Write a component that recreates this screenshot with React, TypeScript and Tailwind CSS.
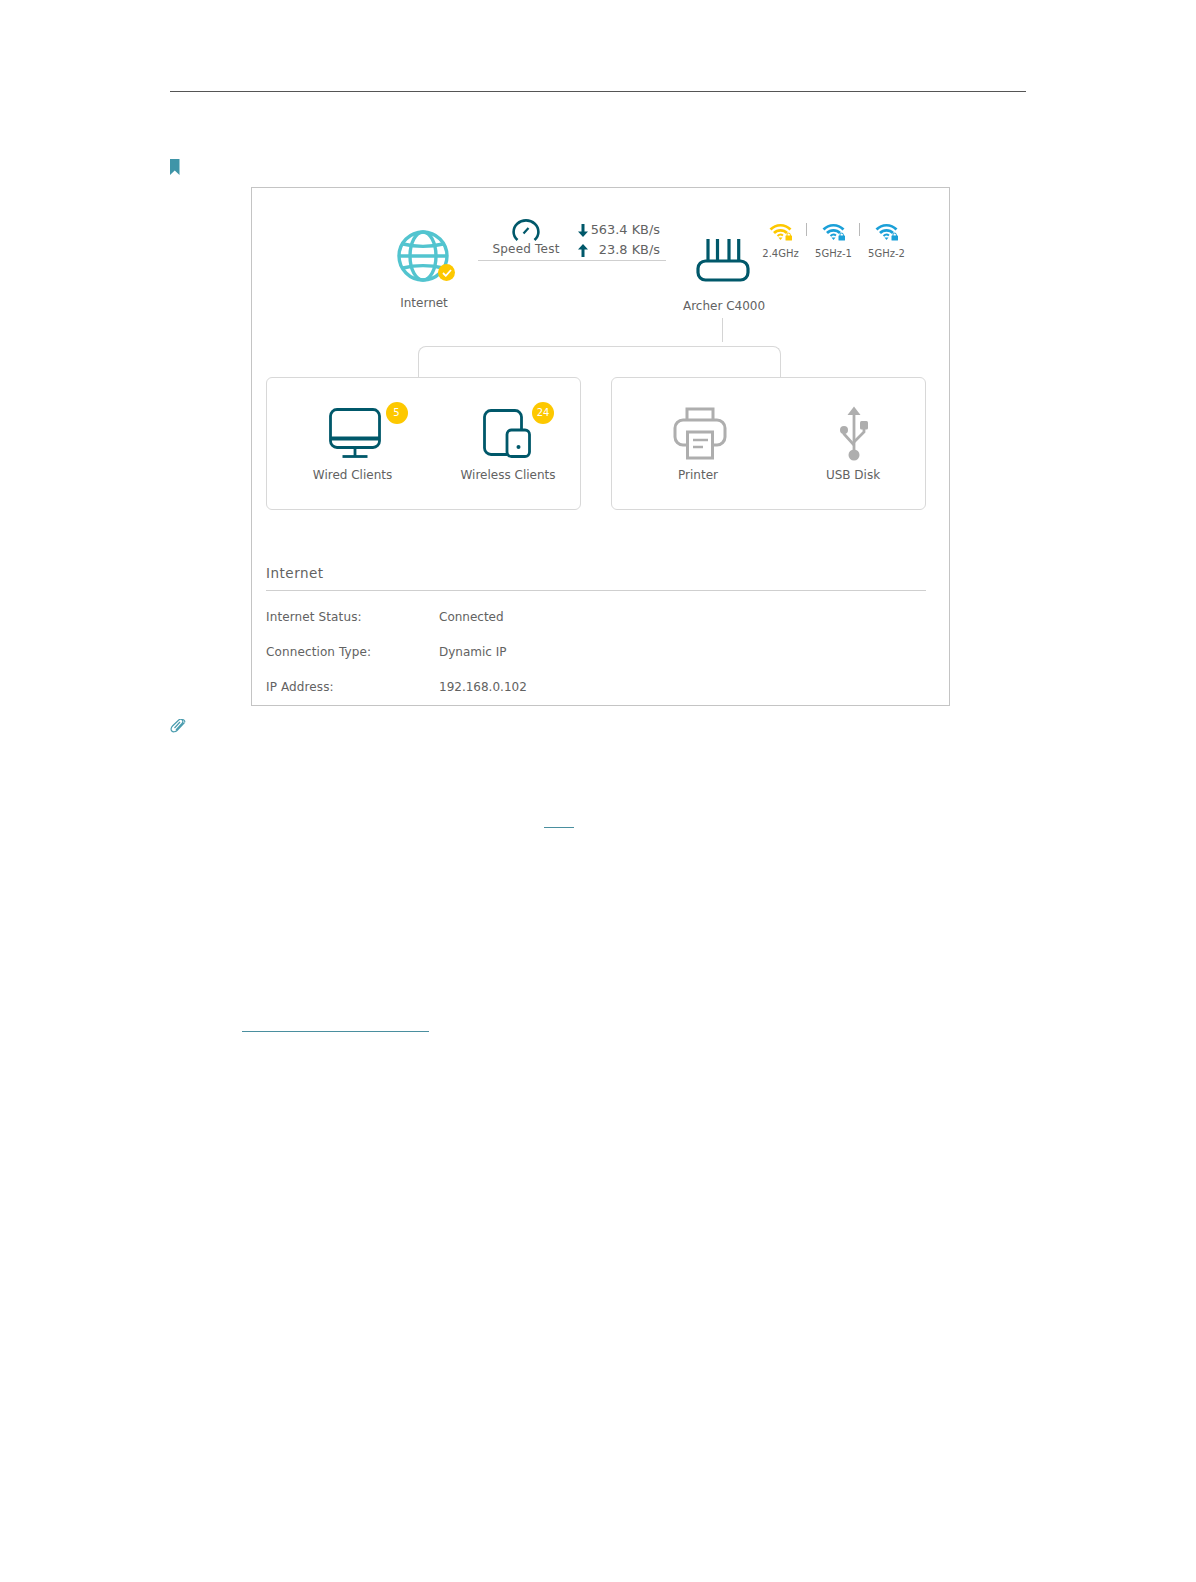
import React from "react";

const teal = "#00586a";
const gray = "#aeaeae";

function Globe() {
  return (
    <svg width="54" height="54" viewBox="0 0 54 54" fill="none" stroke="#52c4cf" strokeWidth="3.400">
      <circle cx="26" cy="26" r="24" />
      <ellipse cx="26" cy="26" rx="13" ry="24" />
      <path d="M6 14c12 3 28 3 40 0" />
      <path d="M6 38c12-3 28-3 40 0" />
      <path d="M2 26h48" />
    </svg>
  );
}

function Gauge() {
  return (
    <svg width="28" height="22" viewBox="0 0 28 22" fill="none" stroke={teal} strokeWidth="2.600">
      <path d="M5.500 21C2.800 18.600 1.600 15.800 1.600 13A12.400 11.600 0 0 1 26.400 13C26.400 15.800 25.200 18.600 22.500 21" />
      <path d="M11.500 14.500 16.500 9" strokeWidth="2.200" />
    </svg>
  );
}

function Arrow({ up }: { up?: boolean }) {
  return (
    <svg width="10" height="13" viewBox="0 0 10 13" fill={teal} className={up ? "rotate-180" : ""}>
      <path d="M3.500 0h3v7.500H10L5 13 0 7.500h3.500z" />
    </svg>
  );
}

function Router() {
  return (
    <svg width="54" height="45" viewBox="0 0 54 45" fill="none" stroke={teal} strokeWidth="3.200" className="ml-[-3px]">
      <rect x="2" y="23" width="50" height="19" rx="7.500" />
      <path d="M12 1v22M21.500 1v22M33 1v22M42.700 1v22" />
    </svg>
  );
}

function Wifi({ color }: { color: string }) {
  return (
    <svg width="24" height="18" viewBox="0 0 24 18" fill="none" stroke={color} strokeWidth="2.700">
      <path d="M1.500 6.500C7 .8 16 .8 21.500 6.500" />
      <path d="M5 10C8.500 6.400 14.500 6.400 18 10" />
      <path d="M8.500 13C10.200 11.400 12.500 11.400 14 12.500" strokeWidth="2" />
      <path d="M9.500 14.500h4L11.500 17z" fill={color} stroke="none" />
      <rect x="16.500" y="12.500" width="6.500" height="5" rx="0.500" fill={color} stroke="none" />
      <path d="M18 13v-1.200a1.700 1.700 0 0 1 3.400 0V13" strokeWidth="1" />
    </svg>
  );
}

function Monitor() {
  return (
    <svg width="53" height="50" viewBox="0 0 53 50" fill="none" stroke={teal} strokeWidth="2.800">
      <rect x="1.500" y="1.500" width="49" height="38" rx="6.500" />
      <path d="M1.500 30.500h49" strokeWidth="4.200" />
      <path d="M26 40v8" />
      <path d="M13.500 48.500h25" />
    </svg>
  );
}

function Devices() {
  return (
    <svg width="48" height="49" viewBox="0 0 48 49" fill="none" stroke={teal} strokeWidth="2.800" className="mt-[1px]">
      <path d="M24 45.500H8a6.500 6.500 0 0 1-6.500-6.500V8A6.500 6.500 0 0 1 8 1.500h24A6.500 6.500 0 0 1 38.500 8v13" />
      <rect x="24" y="21" width="22.500" height="26.500" rx="4.500" fill="#fff" />
      <circle cx="35.500" cy="38" r="2" fill={teal} stroke="none" />
    </svg>
  );
}

function Printer() {
  return (
    <svg width="54" height="53" viewBox="0 0 54 53" fill="none" stroke={gray} strokeWidth="3" className="mt-[-1px]">
      <path d="M14 14V2h26v12" />
      <path d="M13 38H10a8 8 0 0 1-8-8V21a8 8 0 0 1 8-8h34a8 8 0 0 1 8 8v9a8 8 0 0 1-8 8h-3" />
      <rect x="14.500" y="25" width="25" height="26" fill="#fff" />
      <path d="M20 33h15M20 40h10" strokeWidth="2.600" />
    </svg>
  );
}

function Usb() {
  return (
    <svg width="30" height="56" viewBox="0 0 30 56" fill={gray} stroke={gray} strokeWidth="2.800" className="mt-[-3px]">
      <path d="M14 1.500 20.500 10H7.500z" stroke="none" />
      <path d="M14 9v41" fill="none" />
      <path d="M14 40 4 29V25" fill="none" />
      <path d="M14 37 24 27V20" fill="none" />
      <circle cx="4" cy="25" r="4" stroke="none" />
      <rect x="20" y="16" width="8" height="8.500" rx="1.500" stroke="none" />
      <circle cx="14" cy="50" r="5.500" stroke="none" />
    </svg>
  );
}

function Bookmark() {
  return (
    <svg width="10" height="16" viewBox="0 0 10 16" className="block">
      <path d="M0 0h9.500v16L4.750 11.500 0 16z" fill="#3f95a8" />
    </svg>
  );
}

function Clip() {
  return (
    <svg width="16" height="14" viewBox="0 0 16 14" fill="none" stroke="#4a9cae" strokeWidth="1.200" className="block">
      <path d="M14.500 3.500 7 11.500C5.500 13 3 13.200 1.800 12S1 8.500 2.500 7L8.500 1.200c1.200-1 3-1 3.800-.2s.8 2.300-.3 3.400L6 11" />
      <path d="M12 .8c1.500-.5 3 .6 2.800 2.500" />
      <path d="M10 3 4.500 9" />
    </svg>
  );
}

function Device({
  icon,
  label,
  badge,
  badgeClass,
  shift,
  labelClass,
}: {
  icon: React.ReactNode;
  label: string;
  badge?: string;
  badgeClass?: string;
  shift: string;
  labelClass?: string;
}) {
  return (
    <div className="w-[140px] flex flex-col items-center">
      <div className={`relative h-[56px] flex items-start ${shift}`}>
        {icon}
        {badge && (
          <span className={`absolute w-[22px] h-[22px] rounded-full bg-[#fdc800] text-white text-[10px] leading-[22px] text-center ${badgeClass}`}>
            {badge}
          </span>
        )}
      </div>
      <div className={`mt-[3px] text-[12px] leading-[16px] whitespace-nowrap ${labelClass ?? ""}`}>{label}</div>
    </div>
  );
}

function Band({ color, label, sep }: { color: string; label: string; sep?: boolean }) {
  return (
    <div className="w-[53px] flex flex-col items-center relative">
      <Wifi color={color} />
      <div className="mt-[6px] text-[10px] leading-[14px] whitespace-nowrap">{label}</div>
      {sep && <span className="absolute right-[0px] top-[0px] w-px h-[13px] bg-[#b9b9b9]" />}
    </div>
  );
}

function Row({ k, v }: { k: string; v: string }) {
  return (
    <div className="flex h-[35px] items-center">
      <div className="w-[173px] tracking-[0.12px]">{k}</div>
      <div>{v}</div>
    </div>
  );
}

export default function App() {
  return (
    <div
      className="relative w-[1196px] h-[1582px] bg-white text-[#626262] overflow-hidden pt-[91px] pl-[170px]"
      style={{ fontFamily: '"DejaVu Sans", sans-serif' }}
    >
      <div className="w-[856px] h-px bg-[#555555]" />
      <div className="mt-[67px]">
        <Bookmark />
      </div>
      <div className="ml-[81px] mt-[12px] w-[699px] h-[519px] border border-[#c4c4c4] overflow-hidden">
        {/* top row */}
        <div className="h-[158px] flex items-start pl-[142px]">
          <div className="w-[60px] pt-[42px] flex flex-col items-center">
            <div className="relative w-[54px] h-[54px]">
              <Globe />
              <span className="absolute left-[41px] top-[34px] w-[17px] h-[17px] rounded-full bg-[#fdc800] flex items-center justify-center">
                <svg width="10" height="8" viewBox="0 0 10 8" fill="none" stroke="#fff" strokeWidth="1.800">
                  <path d="M1 4l2.800 2.800L9 1" />
                </svg>
              </span>
            </div>
            <div className="mt-[11px] text-[12px] leading-[16px]">Internet</div>
          </div>
          <div className="ml-[24px] mt-[31px] w-[188px] h-[42px] border-b border-[#cfcfcf] flex">
            <div className="w-[96px] flex flex-col items-center">
              <Gauge />
              <div className="text-[12px] leading-[16px] whitespace-nowrap tracking-[0.2px]">Speed Test</div>
            </div>
            <div className="w-[86px] pt-[1px] text-[12.900px] leading-[20px]">
              <div className="flex items-center justify-between whitespace-nowrap">
                <span className="ml-[4px]"><Arrow /></span>
                <span>563.4 KB/s</span>
              </div>
              <div className="flex items-center justify-between whitespace-nowrap">
                <span className="ml-[4px]"><Arrow up /></span>
                <span>23.8 KB/s</span>
              </div>
            </div>
          </div>
          <div className="ml-[28px] w-[60px] h-full pt-[50px] flex flex-col items-center">
            <Router />
            <div className="mt-[15px] text-[12px] leading-[16px] whitespace-nowrap">Archer C4000</div>
            <div className="mt-[4px] w-px h-[24px] bg-[#d4d4d4] ml-[-3px]" />
          </div>
          <div className="mt-[35px] flex">
            <Band color="#fdc800" label="2.4GHz" sep />
            <Band color="#1ba0d8" label="5GHz-1" sep />
            <Band color="#1ba0d8" label="5GHz-2" />
          </div>
        </div>
        {/* bracket */}
        <div className="ml-[166px] w-[363px] h-[31px] border border-b-0 border-[#d8d8d8] rounded-t-[8px]" />
        {/* cards */}
        <div className="ml-[14px] flex gap-[30px]">
          <div className="w-[315px] h-[133px] border border-[#d8d8d8] rounded-[6px] pt-[30px] pl-[15px] flex gap-[16px]">
            <Device icon={<Monitor />} label="Wired Clients" badge="5" badgeClass="left-[57px] top-[-6px]" shift="ml-[6px]" labelClass="ml-[1px]" />
            <Device icon={<Devices />} label="Wireless Clients" badge="24" badgeClass="left-[49px] top-[-6px]" shift="ml-[-2px]" />
          </div>
          <div className="w-[315px] h-[133px] border border-[#d8d8d8] rounded-[6px] pt-[30px] pl-[15px] flex gap-[16px]">
            <Device icon={<Printer />} label="Printer" shift="ml-[5px]" labelClass="ml-[2px]" />
            <Device icon={<Usb />} label="USB Disk" shift="ml-[4px]" />
          </div>
        </div>
        {/* details */}
        <div className="ml-[14px] mr-[23px] mt-[53px]">
          <div className="h-[28px] border-b border-[#cfcfcf] text-[13.500px] leading-[20px] tracking-[0.5px]">Internet</div>
          <div className="mt-[8px] text-[12px]">
            <Row k="Internet Status:" v="Connected" />
            <Row k="Connection Type:" v="Dynamic IP" />
            <Row k="IP Address:" v="192.168.0.102" />
          </div>
        </div>
      </div>
      <div className="mt-[13px]">
        <Clip />
      </div>
      <div className="ml-[374px] mt-[94px] w-[30px] h-px bg-[#4a8f9f]" />
      <div className="ml-[72px] mt-[203px] w-[187px] h-px bg-[#4a8f9f]" />
    </div>
  );
}
